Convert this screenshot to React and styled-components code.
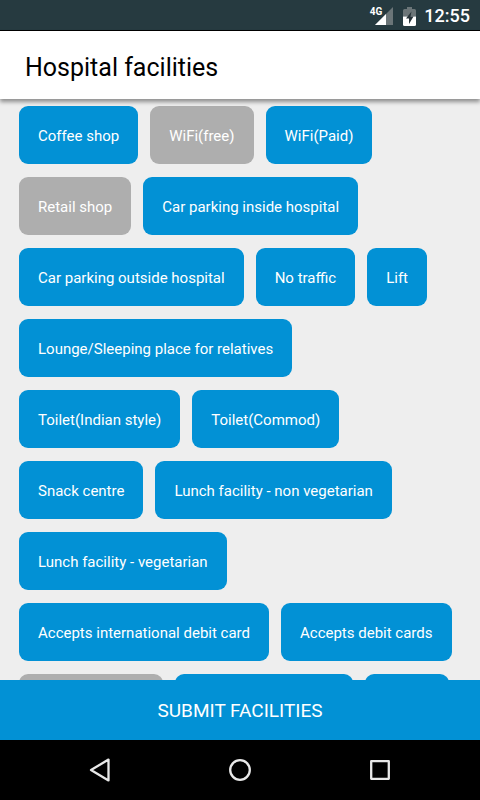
import React, { useState } from "react";
import styled, { createGlobalStyle } from "styled-components";

const facilities = [
  { name: "Coffee shop", selected: true },
  { name: "WiFi(free)", selected: false },
  { name: "WiFi(Paid)", selected: true },
  { name: "Retail shop", selected: false },
  { name: "Car parking inside hospital", selected: true },
  { name: "Car parking outside hospital", selected: true },
  { name: "No traffic", selected: true },
  { name: "Lift", selected: true },
  { name: "Lounge/Sleeping place for relatives", selected: true },
  { name: "Toilet(Indian style)", selected: true },
  { name: "Toilet(Commod)", selected: true },
  { name: "Snack centre", selected: true },
  { name: "Lunch facility - non vegetarian", selected: true },
  { name: "Lunch facility - vegetarian", selected: true },
  { name: "Accepts international debit card", selected: true },
  { name: "Accepts debit cards", selected: true },
  { name: "Medical centres", selected: false },
  { name: "Accepts health cards", selected: true },
  { name: "Library", selected: true },
];

const App = () => {
  const [items, setItems] = useState(facilities);

  const toggle = (name) => {
    setItems(
      items.map((item) =>
        item.name === name ? { ...item, selected: !item.selected } : item
      )
    );
  };

  return (
    <Screen>
      <GlobalStyle />
      <StatusBar>
        <SignalIcon />
        <BatteryIcon />
        <Clock>12:55</Clock>
      </StatusBar>

      <Header>
        <Title>Hospital facilities</Title>
      </Header>

      <ChipList>
        {items.map((item) => (
          <Chip
            key={item.name}
            type="button"
            aria-pressed={item.selected}
            $selected={item.selected}
            onClick={() => toggle(item.name)}
          >
            {item.name}
          </Chip>
        ))}
      </ChipList>

      <SubmitButton type="button">SUBMIT FACILITIES</SubmitButton>

      <NavBar>
        <NavButton type="button" aria-label="Back">
          <svg width="24" height="26" viewBox="0 0 24 26">
            <path d="M20.5 2.6V23.4L3 13Z" />
          </svg>
        </NavButton>
        <NavButton type="button" aria-label="Home">
          <svg width="24" height="26" viewBox="0 0 24 26">
            <circle cx="12" cy="13" r="9.8" />
          </svg>
        </NavButton>
        <NavButton type="button" aria-label="Recent apps">
          <svg width="24" height="26" viewBox="0 0 24 26">
            <rect x="3.2" y="4.2" width="17.6" height="17.6" />
          </svg>
        </NavButton>
      </NavBar>
    </Screen>
  );
};

const SignalIcon = () => (
  <Signal>
    <Network>4G</Network>
    <svg width="18" height="18" viewBox="0 0 18 18">
      <path d="M18 0V18H0Z" fill="#6b7578" />
      <path d="M11 7V18H0Z" fill="#fff" />
    </svg>
  </Signal>
);

const BatteryIcon = () => (
  <svg width="13" height="19" viewBox="0 0 13 19">
    <path
      d="M4 0H9V2H11.5Q13 2 13 3.5V9.5H0V3.5Q0 2 1.5 2H4Z"
      fill="#6b7578"
    />
    <path d="M0 9.5H13V17.5Q13 19 11.5 19H1.5Q0 19 0 17.5Z" fill="#fff" />
    <path d="M8.5 4.5L3 11.5H6V17L10.5 9.5H7.5Z" fill="#263238" />
  </svg>
);

const GlobalStyle = createGlobalStyle`
  * {
    box-sizing: border-box;
  }

  body {
    margin: 0;
    background: #eee;
    font-family: Roboto, sans-serif;
  }

  button {
    border: none;
    font-family: inherit;
    cursor: pointer;
  }
`;

const Screen = styled.div`
  display: flex;
  flex-direction: column;
  height: 100vh;
  overflow: hidden;
`;

const StatusBar = styled.div`
  display: flex;
  flex-shrink: 0;
  align-items: center;
  justify-content: flex-end;
  height: 31px;
  padding: 2px 10px 0;
  color: #fff;
  background: #263a40;
  border-bottom: 1px solid #000;
`;

const Signal = styled.div`
  display: flex;
  align-items: flex-start;
  margin-right: 10px;

  svg {
    margin-left: -7px;
  }
`;

const Network = styled.span`
  font-size: 10px;
  font-weight: 700;
  line-height: 10px;
`;

const Clock = styled.span`
  margin-left: 8px;
  font-size: 18px;
  font-weight: 500;
  line-height: 28px;
`;

const Header = styled.header`
  position: relative;
  z-index: 1;
  flex-shrink: 0;
  padding: 22px 25px 17px;
  background: #fff;
  box-shadow: 0 3px 4px rgba(0, 0, 0, 0.4);
`;

const Title = styled.h1`
  margin: 0;
  color: #000;
  font-size: 25px;
  font-weight: 400;
  line-height: 29px;
`;

const ChipList = styled.main`
  display: flex;
  flex: 1;
  flex-wrap: wrap;
  align-content: flex-start;
  gap: 13px 12px;
  min-height: 0;
  padding: 7px 19px;
  overflow-y: auto;
  scrollbar-width: none;
`;

const Chip = styled.button`
  height: 58px;
  padding: 2px 19px 0;
  color: #fff;
  font-size: 15px;
  line-height: 18px;
  white-space: nowrap;
  background: ${(props) => (props.$selected ? "#0291d5" : "#aeaeae")};
  border-radius: 9px;
`;

const SubmitButton = styled.button`
  flex-shrink: 0;
  height: 60px;
  color: #fff;
  font-size: 19px;
  background: #0291d5;
`;

const NavBar = styled.nav`
  display: flex;
  flex-shrink: 0;
  align-items: center;
  justify-content: center;
  height: 60px;
  background: #000;
`;

const NavButton = styled.button`
  display: flex;
  align-items: center;
  justify-content: center;
  width: 140px;
  height: 60px;
  padding: 0;
  background: none;

  svg {
    fill: none;
    stroke: #e8e8e8;
    stroke-width: 2.3;
    stroke-linejoin: round;
  }
`;

export default App;
